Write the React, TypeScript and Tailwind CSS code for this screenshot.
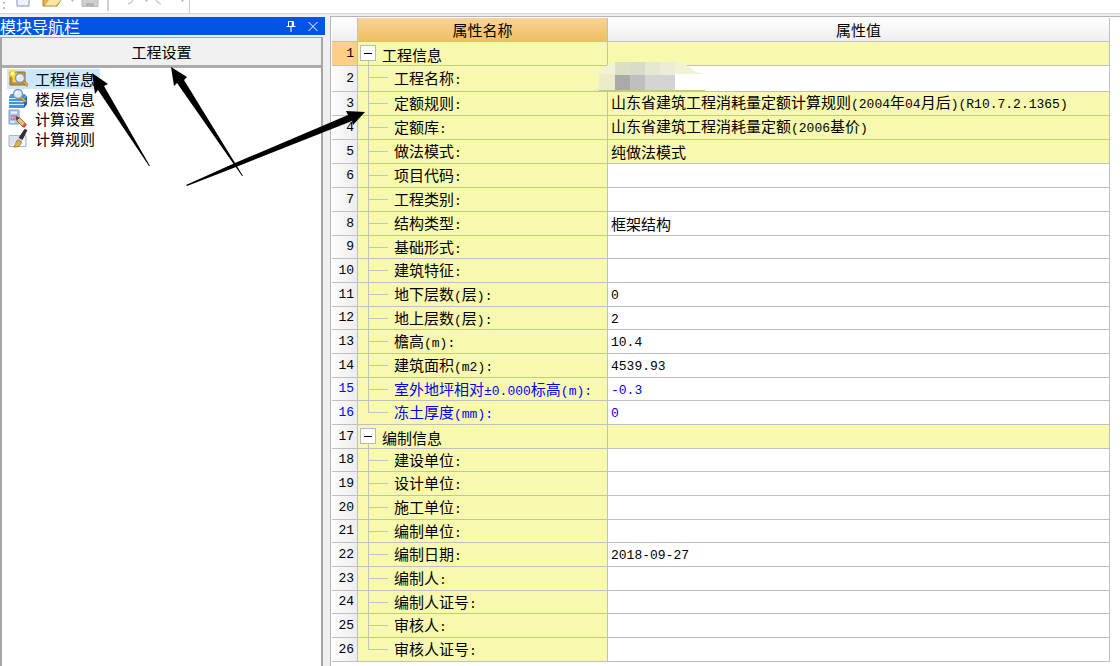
import { Fragment } from 'react'
import type { ReactNode } from 'react'
import clsx from 'clsx'

interface PropertyRow {
  name: string
  value?: string
  group?: boolean
  last?: boolean
  readOnly?: boolean
  optional?: boolean
}

interface NavEntry {
  label: string
  icon: ReactNode
}

const ROWS: PropertyRow[] = [
  { name: '工程信息', group: true, readOnly: true },
  { name: '工程名称:' },
  { name: '定额规则:', value: '山东省建筑工程消耗量定额计算规则(2004年04月后)(R10.7.2.1365)', readOnly: true },
  { name: '定额库:', value: '山东省建筑工程消耗量定额(2006基价)', readOnly: true },
  { name: '做法模式:', value: '纯做法模式', readOnly: true },
  { name: '项目代码:' },
  { name: '工程类别:' },
  { name: '结构类型:', value: '框架结构' },
  { name: '基础形式:' },
  { name: '建筑特征:' },
  { name: '地下层数(层):', value: '0' },
  { name: '地上层数(层):', value: '2' },
  { name: '檐高(m):', value: '10.4' },
  { name: '建筑面积(m2):', value: '4539.93' },
  { name: '室外地坪相对±0.000标高(m):', value: '-0.3', optional: true },
  { name: '冻土厚度(mm):', value: '0', optional: true, last: true },
  { name: '编制信息', group: true, readOnly: true },
  { name: '建设单位:' },
  { name: '设计单位:' },
  { name: '施工单位:' },
  { name: '编制单位:' },
  { name: '编制日期:', value: '2018-09-27' },
  { name: '编制人:' },
  { name: '编制人证号:' },
  { name: '审核人:' },
  { name: '审核人证号:', last: true },
]

function rowHeight(n: number) {
  if (n === 2) return 'h-[25px]'
  if (n >= 9 && n % 3 === 0) return 'h-[22px]'
  return 'h-[23px]'
}

// Latin runs are set a bit smaller so they sit well next to the Chinese glyphs
function MixedText({ text }: { text: string }) {
  return (
    <>
      {text.split(/([\x20-\x7e±]+)/).map((part, i) =>
        i % 2 === 1 ? (
          <span key={i} className="font-['Liberation_Mono',monospace] text-[13px]">
            {part}
          </span>
        ) : (
          <Fragment key={i}>{part}</Fragment>
        )
      )}
    </>
  )
}

function Magnifier({ x, y }: { x: number; y: number }) {
  return (
    <g>
      <path d={`M${x + 3} ${y + 3}l4 4`} stroke="#8a5a1c" strokeWidth="3" strokeLinecap="round" />
      <path d={`M${x + 4} ${y + 4}l3 3`} stroke="#e8a83c" strokeWidth="2" strokeLinecap="round" />
      <circle cx={x} cy={y} r="4.500" fill="#dcebf8" stroke="#8496ad" strokeWidth="1.400" />
      <path d={`M${x - 2.5} ${y}a2.500 2.500 0 0 1 2.500-2.500`} stroke="#fff" fill="none" />
    </g>
  )
}

const NAV: NavEntry[] = [
  {
    label: '工程信息',
    icon: (
      <svg viewBox="0 0 20 20" className="size-5" aria-hidden="true">
        <path d="M2 3h15v13H2z" fill="#d9982e" stroke="#9a6a1e" />
        <path d="M4 5h11v9H4z" fill="#f6cf70" stroke="#b98127" />
        <path d="M4.500 0v9M0 4.500h9M1.500 1.500l6 6M7.500 1.500l-6 6" stroke="#ffd92e" strokeWidth="1.500" />
        <circle cx="4.500" cy="4.500" r="2" fill="#fff6b0" />
        <Magnifier x={12} y={9} />
      </svg>
    ),
  },
  {
    label: '楼层信息',
    icon: (
      <svg viewBox="0 0 20 20" className="size-5" aria-hidden="true">
        <path d="M3 5h14l2 3v7l-3 4H1V8z" fill="#3e97df" />
        <path d="M1 9.500h15l3-2M1 12.500h15l3-2M1 15.500h15l3-2" stroke="#d6ecfc" fill="none" />
        <path d="M16 10l3-3v8l-3 4z" fill="#1f68b0" />
        <Magnifier x={10} y={5} />
      </svg>
    ),
  },
  {
    label: '计算设置',
    icon: (
      <svg viewBox="0 0 20 20" className="size-5" aria-hidden="true">
        <path d="M1 1h10v14H1z" fill="#a9c9f2" stroke="#7ba0d2" />
        <path d="M3 2.500h6v2H3z" fill="#eef6ff" />
        <path d="M2.500 7h7M2.500 10h7" stroke="#d9606a" strokeWidth="1.500" strokeDasharray="2 0.500" />
        <path d="M2.500 13h4" stroke="#fff" strokeWidth="1.500" strokeDasharray="2 0.500" />
        <path d="M8 8l4 1 6 6-3 3-6-6z" fill="#f1c264" stroke="#6b5432" strokeWidth="0.800" />
        <path d="M7.500 7.500l4 1-2.500 3z" fill="#444" />
        <path d="M17 14l2 2-3 3-2-2z" fill="#cf4f48" />
      </svg>
    ),
  },
  {
    label: '计算规则',
    icon: (
      <svg viewBox="0 0 20 20" className="size-5" aria-hidden="true">
        <path d="M1 6.500h17v11H1z" fill="#dbe4ee" stroke="#a9b8c8" />
        <path d="M2 17l15-9v9z" fill="#f6f8fb" />
        <path d="M16.500 0l3 1-5 10-4-2z" fill="#2c2e31" />
        <path d="M10.500 9l4 2-1 2-4-2z" fill="#c3c7cc" />
        <path d="M9.500 11l4 2c-1 4-4 5.500-8 5 2-2 2-4.500 4-7z" fill="#e4ad45" stroke="#8b662a" strokeWidth="0.700" />
      </svg>
    ),
  },
]

function Toolbar() {
  return (
    <header className="flex h-[14px] items-start border-b border-[#d4d4d4] bg-white">
      <div className="flex h-[13px] w-[190px] border-r border-[#cccccc]">
        <svg viewBox="0 0 188 13" className="h-[13px] w-[188px]" aria-hidden="true">
          <path d="M3 2h2v2H3zM3 7h2v2H3z" fill="#c4c4c4" />
          <path d="M17 -2h12v8H17z" fill="#eef3f9" stroke="#7c94b3" />
          <path d="M43 -1h13l5 1-4 6H43z" fill="#e5b04c" stroke="#ae7f2e" />
          <path d="M45 5.500l4-5.500h12l-5 5.500z" fill="#fde5a4" />
          <path d="M71 0h3l-1.500 2zM145 0h3l-1.500 2zM181 0h3l-1.500 2z" fill="#b5b5b5" />
          <path d="M82 -2h16v8.500H82z" fill="#d0d0d0" stroke="#b8b8b8" />
          <path d="M86 3h8v3h-8z" fill="#b4b4b4" />
          <path d="M108 0v11" stroke="#a0a0a0" />
          <path d="M133 -1q0 3-5 5M156 -1q0 3 5 5" stroke="#cfcfcf" strokeWidth="1.500" fill="none" />
        </svg>
      </div>
    </header>
  )
}

function NavigationPanel() {
  return (
    <aside className="flex w-[325px] shrink-0 flex-col pt-[3px]">
      <div className="flex h-[18px] items-center justify-between bg-[#0054e3] pr-1.5 text-white">
        <h2 className="text-[16px] leading-4">模块导航栏</h2>
        <div className="flex items-center gap-2.5">
          <button type="button" aria-label="固定" className="size-3">
            <svg viewBox="0 0 12 12" className="size-3" fill="none" stroke="currentColor">
              <path d="M3.500 6.500v-5h5v5M1.500 6.500h9M6 7v5" />
              <path d="M7.500 1.500v5" strokeWidth="1.500" />
            </svg>
          </button>
          <button type="button" aria-label="关闭" className="size-3">
            <svg viewBox="0 0 12 12" className="size-3" fill="none" stroke="currentColor">
              <path d="M1.500 2l9 9M10.500 2l-9 9" />
            </svg>
          </button>
        </div>
      </div>

      <div className="mr-0.5 mt-0.5 flex grow flex-col border-x-2 border-t border-[#a5a5a8] bg-white">
        <button type="button" className="h-[30px] border-b-[3px] border-[#ababab] bg-[#f0f0f0] text-[15px] leading-[27px]">
          工程设置
        </button>
        <nav className="flex flex-col items-start pl-[5px] pt-px">
          {NAV.map((entry, i) => (
            <a
              key={entry.label}
              href="#"
              onClick={(e) => e.preventDefault()}
              className={clsx('flex h-5 items-center gap-[7px] pl-px pr-[5px] text-[15px] leading-5', i === 0 && 'bg-[#cce8ff]')}
            >
              {entry.icon}
              {entry.label}
            </a>
          ))}
        </nav>
      </div>
    </aside>
  )
}

function TreeCell({ row }: { row: PropertyRow }) {
  if (row.group) {
    return (
      <div className="flex h-full items-center pl-0.5">
        <div className="flex h-full flex-col items-center pt-[3px]">
          <button
            type="button"
            aria-label={'折叠' + row.name}
            className="flex size-4 shrink-0 items-center justify-center border border-[#b8b8b8] bg-white"
          >
            <span className="h-px w-2 bg-black" />
          </button>
          <span className="w-px grow bg-[#c4c4c4]" />
        </div>
        <span className="pl-1.5 pt-0.5">{row.name}</span>
      </div>
    )
  }

  return (
    <div className="flex h-full items-center pl-2.5">
      <div className="flex h-full w-5 flex-col">
        <span className="h-3 border-b border-l border-[#c4c4c4]" />
        {!row.last && <span className="w-px grow bg-[#c4c4c4]" />}
      </div>
      <span className="whitespace-nowrap pl-1.5 pt-0.5">
        <MixedText text={row.name} />
      </span>
    </div>
  )
}

// Pixelated patch that hides the project name
function Mosaic() {
  return (
    <svg viewBox="0 0 120 30" className="absolute -left-6 -top-2 h-[30px] w-[120px]" aria-hidden="true">
      <path d="M0 12l16-2 3-6 10-4h66l14 10 10 2z" fill="#f1f3d4" />
      <path d="M12 12h16v17H4l8-4z" fill="#ecedc8" />
      <path d="M28 0h15v13H28z" fill="#dcdfc4" />
      <path d="M43 0h15v13H43z" fill="#dadccb" />
      <path d="M58 0h15v13H58z" fill="#e6e8d3" />
      <path d="M73 0h15v13H73z" fill="#ecedd9" />
      <path d="M28 13h15v15H28z" fill="#aaaaaa" />
      <path d="M43 13h15v15H43z" fill="#bfbfbf" />
      <path d="M58 13h30v15H58z" fill="#d4d4d4" />
      <path d="M12 28h106v1H12z" fill="#c5c98a" />
    </svg>
  )
}

function PropertyTable() {
  return (
    <main className="min-w-0 grow border-l border-t border-[#b3b3b9] bg-white pl-px pr-2.5 pt-px">
      <table className="w-full table-fixed border-separate border-spacing-0">
        <colgroup>
          <col className="w-[26px]" />
          <col className="w-[250px]" />
          <col />
        </colgroup>
        <thead className="text-[15px] leading-5">
          <tr>
            <th className="h-6 border-b border-r border-[#c0c0c0] bg-linear-to-b from-white to-[#eeeeee] p-0" />
            <th className="h-6 border-b border-r border-[#c0c0c0] bg-linear-to-b from-[#f8d394] to-[#f0bf63] p-0 font-normal">
              属性名称
            </th>
            <th className="h-6 border-b border-r border-[#c0c0c0] bg-linear-to-b from-white to-[#eeeeee] p-0 font-normal">
              属性值
            </th>
          </tr>
        </thead>
        <tbody className="text-[15px] leading-[18px]">
          {ROWS.map((row, i) => {
            const n = i + 1
            return (
              <tr key={n} className={row.optional ? 'text-[#0000ff]' : 'text-black'}>
                <td
                  className={clsx(
                    "border-b border-r border-[#c0c0c0] p-0 pr-[3px] text-right font-['Liberation_Mono',monospace] text-[13px]",
                    n === 1 ? 'bg-[#ffcf87]' : 'bg-linear-to-r from-[#fdfdfd] to-[#ededed]'
                  )}
                >
                  {n}
                </td>
                <td className="border-b border-r border-[#c0c0c0] bg-[#f7faae] p-0">
                  <div className={rowHeight(n)}>
                    <TreeCell row={row} />
                  </div>
                </td>
                <td
                  className={clsx(
                    'border-b border-r border-[#c0c0c0] p-0 pl-[3px]',
                    row.readOnly ? 'bg-[#f7faae]' : 'bg-white'
                  )}
                >
                  <div className="relative whitespace-nowrap">
                    {n === 2 && <Mosaic />}
                    {row.value ? <MixedText text={row.value} /> : '\u00a0'}
                  </div>
                </td>
              </tr>
            )
          })}
        </tbody>
      </table>
    </main>
  )
}

function Arrows() {
  return (
    <svg viewBox="0 0 380 200" className="pointer-events-none absolute left-0 top-0 h-[200px] w-[380px]" aria-hidden="true">
      <path d="M92 73L108 84L104 86L150 166L149 166L98 90L95 94Z" />
      <path d="M171 67L187 77L184 80L243 176L242 176L177 83L174 86Z" />
      <path d="M365 112L353 125L352 121L236 167L187 186L186 185L235 163L348 115L346 111Z" />
    </svg>
  )
}

export default function App() {
  return (
    <div className="relative flex min-h-screen flex-col bg-[#f0f0f0] font-['Noto_Sans_CJK_SC',sans-serif] text-black">
      <Toolbar />
      <div className="flex grow">
        <NavigationPanel />
        <div className="flex min-w-0 grow pl-[5px] pt-0.5">
          <PropertyTable />
        </div>
      </div>
      <Arrows />
    </div>
  )
}
